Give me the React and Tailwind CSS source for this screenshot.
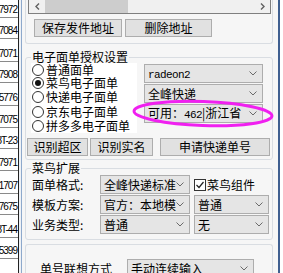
import React from "react";

const cells = [
  ["887972", 18],
  ["887084", 21],
  ["887071", 23],
  ["887908", 21],
  ["885776", 23],
  ["887075", 22],
  ["88T-23", 21],
  ["887971", 22],
  ["881707", 23],
  ["887675", 21],
  ["88T-44", 23],
  ["885399", 21],
  ["", 16],
];

const Chevron = () => (
  <svg width="8" height="5" viewBox="0 0 8 5" className="shrink-0">
    <path d="M0.5 0.5 L4 4 L7.5 0.5" fill="none" stroke="#6a6a6a" strokeWidth="1" />
  </svg>
);

const Combo = ({ children, className = "" }) => (
  <div
    className={`flex h-[19px] shrink-0 items-center border border-[#adadad] bg-[#e5e5e5] pl-[3px] pr-[5px] ${className}`}
  >
    <span className="flex-1 overflow-hidden whitespace-nowrap leading-[14px]">{children}</span>
    <Chevron />
  </div>
);

const Button = ({ children, className = "" }) => (
  <div
    className={`flex h-[18px] shrink-0 items-center justify-center border border-[#adadad] bg-[#e1e1e1] leading-[14px] ${className}`}
  >
    {children}
  </div>
);

const Radio = ({ label, checked, h }) => (
  <div className={`flex items-center ${h}`}>
    <span className="mr-[2px] flex h-[12px] w-[12px] shrink-0 items-center justify-center rounded-full border border-[#333] bg-white">
      {checked && <span className="h-[6px] w-[6px] rounded-full bg-[#111]" />}
    </span>
    <span className="leading-[12px]">{label}</span>
  </div>
);

const Mono = ({ children }) => (
  <span className="font-['Liberation_Mono',monospace] text-[11px] tracking-[-0.6px]">{children}</span>
);

// group box: border with a title sitting on the top edge
const Group = ({ title, className = "", children }) => (
  <div className={`w-[248px] shrink-0 rounded-[3px] border border-[#d9dde2] ${className}`}>
    <div className="-mt-[7px] ml-[5px] w-fit bg-[#f6f6f6] px-[1px] leading-[12px]">{title}</div>
    {children}
  </div>
);

export default function App() {
  return (
    <div className="relative flex h-[273px] w-[283px] overflow-hidden bg-white font-['Noto_Sans_CJK_SC','Liberation_Sans',sans-serif] text-[12px] text-black">
      {/* grid column on the left */}
      <div className="flex w-[19px] shrink-0 flex-col border-r border-[#222] bg-white">
        {cells.map(([v, h], i) => (
          <div
            key={i}
            style={{ height: h }}
            className="flex shrink-0 items-end justify-end overflow-hidden whitespace-nowrap border-b border-[#8a8a8a] pb-[2px] pr-[1px] font-['Liberation_Sans',sans-serif] text-[10px] leading-[10px] tracking-[-1px]"
          >
            {v}
          </div>
        ))}
      </div>
      <div className="w-[3px] shrink-0 border-r border-[#8ea9cc] bg-[#eef1f5]" />

      {/* panel */}
      <div className="flex w-[256px] shrink-0 flex-col bg-[#f6f6f6] pl-[3px]">
        {/* sender address group */}
        <div className="h-[44px] w-[248px] shrink-0 rounded-b-[3px] border-x border-b border-[#d9dde2]">
          <div className="ml-[2px] h-[14px] w-[243px] border-x border-b border-[#7f7f7f] bg-white">
            <div className="flex h-[13px] items-center bg-[#f0f0f0]">
              <span className="flex w-[16px] justify-center">
                <svg width="5" height="7" viewBox="0 0 5 7">
                  <path d="M4 0.5 L1 3.5 L4 6.5" fill="none" stroke="#606060" strokeWidth="1.4" />
                </svg>
              </span>
              <span className="h-[13px] w-[83px] bg-[#cdcdcd]" />
              <span className="flex-1" />
              <span className="flex w-[16px] justify-center">
                <svg width="5" height="7" viewBox="0 0 5 7">
                  <path d="M1 0.5 L4 3.5 L1 6.5" fill="none" stroke="#606060" strokeWidth="1.4" />
                </svg>
              </span>
            </div>
          </div>
          <div className="ml-[8px] mt-[5px] flex gap-[3px]">
            <Button className="w-[88px]">保存发件地址</Button>
            <Button className="w-[87px]">删除地址</Button>
          </div>
        </div>

        {/* e-waybill auth group */}
        <Group title="电子面单授权设置" className="mt-[13px] pb-[3px]">
          <div className="flex">
            <div className="ml-[5px] flex h-[70px] w-[106px] flex-col bg-white pl-[1px]">
              <Radio label="普通面单" h="h-[13px]" />
              <Radio label="菜鸟电子面单" checked h="h-[13px]" />
              <Radio label="快递电子面单" h="h-[15px]" />
              <Radio label="京东电子面单" h="h-[15px]" />
              <Radio label="拼多多电子面单" h="h-[14px]" />
            </div>
            <div className="ml-[7px] mt-[1px] flex w-[119px] flex-col gap-[1px]">
              <Combo>
                <Mono>radeon2</Mono>
              </Combo>
              <Combo>全峰快递</Combo>
              <Combo>
                可用：<Mono>462</Mono>|浙江省
              </Combo>
            </div>
          </div>
          <div className="ml-[1px] mt-[5px] flex">
            <Button className="w-[61px]">识别超区</Button>
            <Button className="ml-[2px] w-[63px]">识别实名</Button>
            <Button className="ml-[7px] w-[110px]">申请快递单号</Button>
          </div>
        </Group>

        {/* cainiao ext group */}
        <Group title="菜鸟扩展" className="mt-[8px] pb-[5px]">
          <div className="mt-[1px] flex flex-col gap-[1px] pl-[6px]">
            <div className="flex items-center">
              <span className="w-[68px] leading-[14px]">面单格式:</span>
              <Combo className="w-[90px]">全峰快递标准</Combo>
              <div className="ml-[4px] flex items-center">
                <span className="mr-[1px] flex h-[12px] w-[12px] items-center justify-center border border-[#333] bg-white">
                  <svg width="10" height="10" viewBox="0 0 10 10">
                    <path d="M1.5 5 L4 7.5 L8.5 2" fill="none" stroke="#222" strokeWidth="1.2" />
                  </svg>
                </span>
                <span className="leading-[14px]">菜鸟组件</span>
              </div>
            </div>
            <div className="flex items-center">
              <span className="w-[68px] leading-[14px]">模板方案:</span>
              <Combo className="w-[90px]">官方：本地模板</Combo>
              <Combo className="ml-[4px] w-[75px]">普通</Combo>
            </div>
            <div className="flex items-center">
              <span className="w-[68px] leading-[14px]">业务类型:</span>
              <Combo className="w-[90px]">普通</Combo>
              <Combo className="ml-[4px] w-[75px]">无</Combo>
            </div>
          </div>
        </Group>

        {/* waybill association group */}
        <div className="mt-[4px] w-[248px] flex-1 rounded-t-[3px] border-x border-t border-[#d9dde2] pt-[14px]">
          <div className="flex items-center pl-[14px]">
            <span className="w-[87px] leading-[14px]">单号联想方式</span>
            <Combo className="w-[127px]">手动连续输入</Combo>
          </div>
        </div>
      </div>
      <div className="w-[2px] shrink-0 bg-[#3f5f90]" />
      <div className="flex-1 bg-white" />

      {/* hand-drawn highlight */}
      <svg
        className="pointer-events-none absolute left-[131px] top-[99px]"
        width="145"
        height="30"
        viewBox="0 0 145 30"
      >
        <ellipse
          cx="72"
          cy="14.5"
          rx="69"
          ry="12"
          fill="none"
          stroke="#f020f0"
          strokeWidth="3"
          transform="rotate(2 72 14.5)"
        />
      </svg>
    </div>
  );
}
